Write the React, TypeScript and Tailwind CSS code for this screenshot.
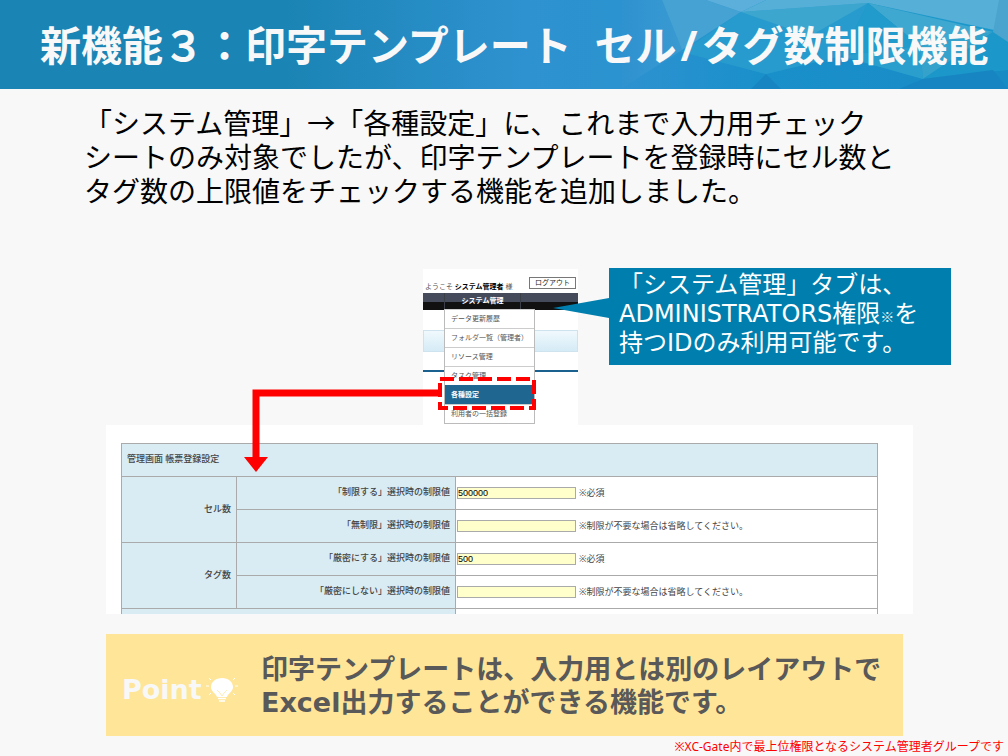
import { useState } from 'react'

const MENU = ['データ更新履歴', 'フォルダ一覧（管理者）', 'リソース管理', 'タスク管理', '各種設定', '利用者の一括登録']

interface Limit {
  id:      string
  label:   string
  initial: string
  note:    string
}

const GROUPS: { name: string; limits: Limit[] }[] = [
  {
    name: 'セル数',
    limits: [
      { id: 'cellLimited',   label: '「制限する」選択時の制限値', initial: '500000', note: '※必須' },
      { id: 'cellUnlimited', label: '「無制限」選択時の制限値',   initial: '',       note: '※制限が不要な場合は省略してください。' },
    ],
  },
  {
    name: 'タグ数',
    limits: [
      { id: 'tagStrict', label: '「厳密にする」選択時の制限値',   initial: '500', note: '※必須' },
      { id: 'tagLoose',  label: '「厳密にしない」選択時の制限値', initial: '',    note: '※制限が不要な場合は省略してください。' },
    ],
  },
]

export default function App() {
  return (
    <div className="flex min-h-screen flex-col bg-[#f8f8f8] font-['Noto_Sans','Noto_Sans_CJK_JP',sans-serif] text-black">
      <Header />

      <main className="flex flex-col">
        <p className="mt-[17px] mr-20 ml-[84px] text-[28px] leading-[34px]">
          「システム管理」→「各種設定」に、これまで入力用チェック<br />
          シートのみ対象でしたが、印字テンプレートを登録時にセル数と<br />
          タグ数の上限値をチェックする機能を追加しました。
        </p>

        <section className="relative mt-[60px]">
          <div className="flex items-start pr-[57px] pl-[423px]">
            <MenuShot />
            <Callout />
          </div>
          <SettingsShot />
          <Annotations />
        </section>

        <PointBox />
      </main>

      <p className="mt-[2px] mr-1 text-right text-xs leading-[18px] text-[#ff0000]">
        ※XC-Gate内で最上位権限となるシステム管理者グループです
      </p>
    </div>
  )
}

function Header() {
  return (
    <header className="relative flex h-[89px] items-center overflow-hidden bg-linear-to-r from-[#1a84b4] from-28% via-[#2e92d0] via-52% to-[#1a98cb]">
      <svg className="absolute inset-y-0 right-0 h-full w-[388px]" viewBox="0 0 388 89" preserveAspectRatio="none" aria-hidden="true">
        <defs>
          <linearGradient id="fade" x1="0" x2="1">
            <stop offset="0" stopColor="#2e92d0" />
            <stop offset="0.35" stopColor="#2096cb" />
            <stop offset="1" stopColor="#1a98cb" />
          </linearGradient>
          <linearGradient id="low" gradientUnits="userSpaceOnUse" x1="0" x2="388" y1="0" y2="0">
            <stop offset="0" stopColor="#2e92d0" />
            <stop offset="0.35" stopColor="#1a90cb" />
            <stop offset="1" stopColor="#178bc4" />
          </linearGradient>
          <linearGradient id="pale" gradientUnits="userSpaceOnUse" x1="0" x2="121" y1="0" y2="0">
            <stop offset="0" stopColor="#2e92d0" />
            <stop offset="1" stopColor="#45a2d3" />
          </linearGradient>
        </defs>
        <path d="M0 0h388v89H0z" fill="url(#fade)" />
        <path d="M0 0h42l20 50L0 89z" fill="url(#pale)" />
        <path d="M42 0h44l35 12-59 38z" fill="#45a2d3" />
        <path d="M0 89L62 52l84 22 75-18 82 23 85-10v20z" fill="url(#low)" />
        <path d="M86 0h60l-25 12z" fill="#5cafda" />
        <path d="M121 12L248 3l-27 53-75 18-84-22z" fill="#279bcd" />
        <path d="M121 12l127-9-58 33z" fill="#3ca6cf" />
        <path d="M146 0h242v33l-140-30-127 9z" fill="#55afd6" />
        <path d="M248 3l125 29-73 14z" fill="#3fa8d0" />
        <path d="M248 3l52 43-79 10z" fill="#219bcb" />
        <path d="M221 56l79-10 3 33z" fill="#2a9fcd" />
        <path d="M300 46l73-14-70 47z" fill="#35a2cc" />
        <path d="M373 32l15 10v28l-85 9z" fill="#1b97ca" />
        <path d="M379 0h9v42l-15-10z" fill="#4ba4cd" />
        <path d="M146 74l15 15h-30z" fill="#1685c1" />
        <path d="M303 79l70-9 15 19H279z" fill="#1785c1" />
      </svg>
      <h1 className="relative pl-10 text-[41px] leading-[60px] font-bold whitespace-nowrap text-[#f8f8f8]">
        新機能３：印字テンプレート<span className="ml-3"> セル</span><span className="mx-1">/</span>タグ数制限機能
      </h1>
    </header>
  )
}

function MenuShot() {
  return (
    <div className="relative mt-px h-[156px] w-[155px] shrink-0 bg-white text-[7px] leading-[10px] text-[#555]">
      <div className="flex h-6 items-start justify-between pt-2 pr-[2px] pl-[2px]">
        <span className="pt-[5px] whitespace-nowrap">ようこそ <b className="text-black">システム管理者</b> 様</span>
        <button type="button" className="h-3 w-[47px] border border-[#777] bg-white text-[#222]">ログアウト</button>
      </div>
      <div className="h-[17px] bg-linear-to-b from-[#454b5a] from-50% to-[#111] to-50% pl-[21px] font-bold text-white">
        <div className="w-[77px] border-x border-[#3b3f48] text-center leading-4">システム管理</div>
      </div>
      <div className="mt-5 h-[22px] border border-[#cfe3ee] bg-linear-to-b from-[#f0f9fd] to-[#d5ebf6]" />
      <div className="mt-[18px] h-[2px] bg-[#1b618f]" />

      <ul className="absolute top-10 left-[21px] w-[91px] border-x border-b border-[#bbb] bg-white">
        {MENU.map((item) => (
          <li key={item}>
            <a href="#settings" className={item === '各種設定' ? activeCls : itemCls}>{item}</a>
          </li>
        ))}
      </ul>
    </div>
  )
}

function Callout() {
  return (
    <div className="relative ml-[31px] h-[97px] flex-1 bg-[#007fae] pt-[3px] pl-[10px] font-['DejaVu_Sans','Noto_Sans_CJK_JP',sans-serif] text-2xl leading-[29px] whitespace-nowrap text-white">
      <svg className="absolute top-[30px] -left-14 h-5 w-14" viewBox="0 0 56 20" aria-hidden="true">
        <path d="M0 10L56 0v20z" fill="#007fae" />
      </svg>
      <p>
        「システム管理」タブは、<br />
        ADMINISTRATORS権限<span className="font-['Noto_Sans_CJK_JP',sans-serif] text-sm leading-none">※</span>を<br />
        持つIDのみ利用可能です。
      </p>
    </div>
  )
}

function SettingsShot() {
  return (
    <div id="settings" className="mr-[95px] ml-[106px] h-[189px] overflow-hidden bg-white pt-[18px] pr-[35px] pl-[15px]">
      <table className="w-full table-fixed border-collapse text-[9px] leading-3 text-[#444]">
        <colgroup>
          <col className="w-[115px]" />
          <col className="w-[219px]" />
          <col />
        </colgroup>
        <tbody>
          <tr className="h-[33px]">
            <th colSpan={3} className={`${headCls} text-left`}>管理画面 帳票登録設定</th>
          </tr>
          {GROUPS.map((group) => group.limits.map((limit, i) => (
            <tr key={limit.id} className="h-[33px]">
              {i === 0 && <th rowSpan={2} className={`${headCls} text-right`}>{group.name}</th>}
              <LimitCells {...limit} />
            </tr>
          )))}
          <tr className="h-[33px]">
            <th colSpan={2} className={headCls} />
            <td className="border border-[#aaa]" />
          </tr>
        </tbody>
      </table>
    </div>
  )
}

function LimitCells({ id, label, initial, note }: Limit) {
  const [value, setValue] = useState(initial)

  return (
    <>
      <th className={`${headCls} text-right`}><label htmlFor={id}>{label}</label></th>
      <td className="border border-[#aaa] pb-px pl-px">
        <div className="flex items-center gap-[3px]">
          <input id={id} type="text" value={value} onChange={(e) => setValue(e.target.value)}
            className="h-3 w-[119px] border border-[#aaa] bg-[#ffffcc] font-['Liberation_Sans',sans-serif] text-[9px] text-black" />
          <span>{note}</span>
        </div>
      </td>
    </>
  )
}

// Dashed frame round the selected menu item, and the arrow down to the settings table
function Annotations() {
  return (
    <svg className="pointer-events-none absolute top-[109px] left-[244px] h-[96px] w-[293px]" viewBox="0 0 293 96" fill="none" aria-hidden="true">
      <path d="M194 16H12v65" stroke="#f00" strokeWidth="7" />
      <path d="M0 80h24L12 95z" fill="#f00" />
      <path d="M196 2h94v29h-94z" stroke="#f00" strokeWidth="4" strokeDasharray="14 5" />
    </svg>
  )
}

function PointBox() {
  return (
    <aside className="mt-5 mr-[105px] ml-[106px] flex h-[102px] items-center bg-[#ffe598] font-['DejaVu_Sans','Noto_Sans_CJK_JP',sans-serif] text-[27px] leading-[33px] font-bold text-[#595959]">
      <div className="flex w-[155px] shrink-0 items-center gap-1 pt-2 pl-4 text-[#f8f8f8]">
        <span>Point</span>
        <Bulb />
      </div>
      <p className="pt-[2px] whitespace-nowrap">
        印字テンプレートは、入力用とは別のレイアウトで<br />
        Excel出力することができる機能です。
      </p>
    </aside>
  )
}

function Bulb() {
  return (
    <svg className="h-[27px] w-8 shrink-0" viewBox="0 0 32 27" fill="none" aria-hidden="true">
      <path d="M16 2C9.500 2 5 6 5 11c0 5 5 6 6 10h10c1-4 6-5 6-10 0-5-4.500-9-11-9z" fill="#fff" />
      <path d="M12 22.500h8M13 25h6" stroke="#fff" strokeWidth="1.500" />
      <path d="M11 14l3 3 2 3 2-3 3-3" stroke="#ffe598" strokeWidth=".7" />
      <path d="M0 10h3M29 10h3M3 2l2 2M29 2l-2 2M3 19l2-2M29 19l-2-2" stroke="#fff" />
    </svg>
  )
}

const itemCls   = 'block h-[19px] border-t border-[#ccc] pl-[6px] leading-[18px] whitespace-nowrap'
const activeCls = 'block h-[19px] border-t border-[#1f6791] bg-[#1f6791] pl-[6px] leading-[18px] font-bold whitespace-nowrap text-white'
const headCls   = 'border border-[#aaa] bg-[#d9ebf3] px-[5px] pb-[2px] font-medium'
